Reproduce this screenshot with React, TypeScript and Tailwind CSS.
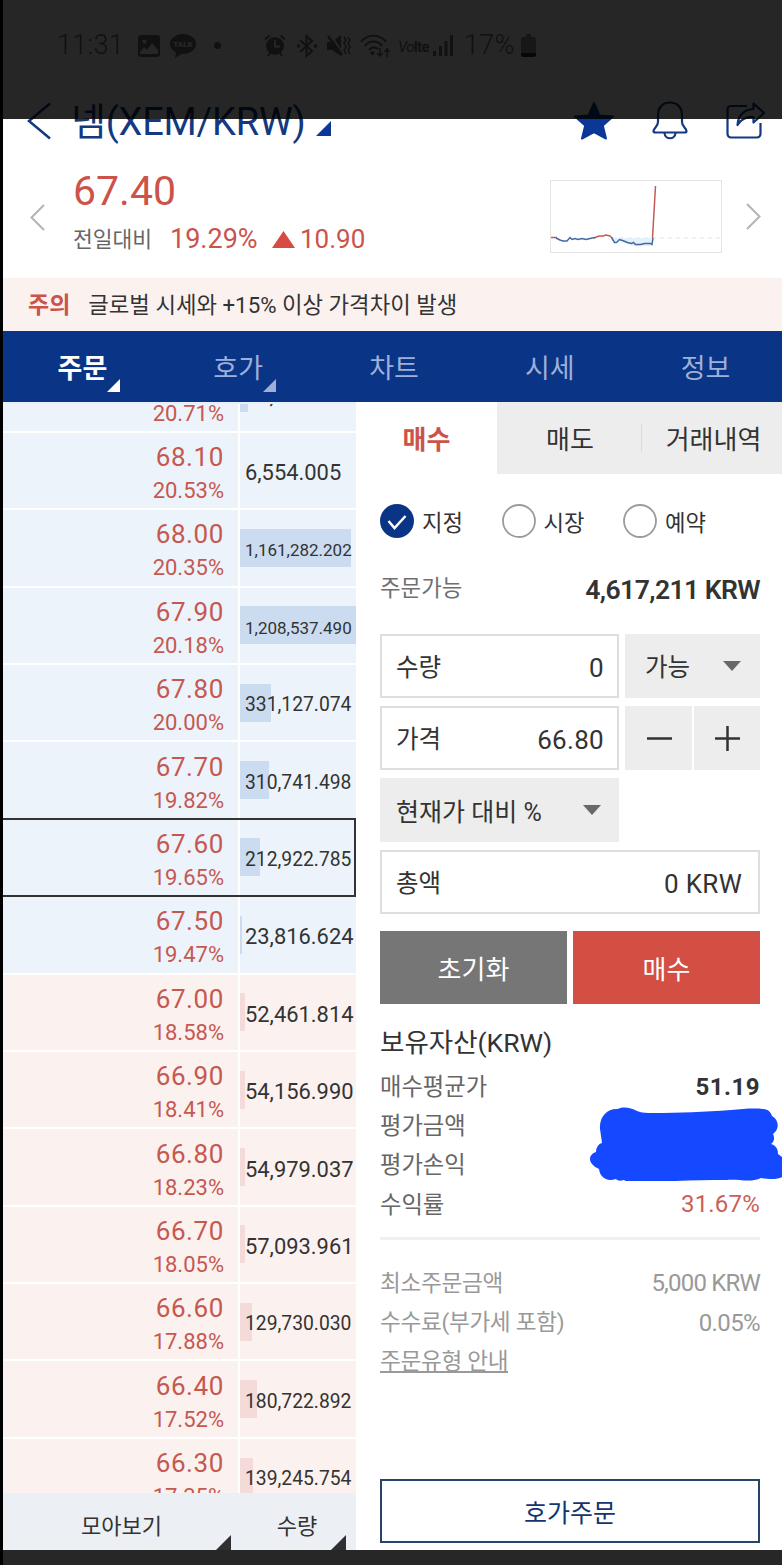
import {clsx} from 'clsx'
import type {ReactNode} from 'react'

type Order = {
  price: string
  rate: string
  amount: string
  fill: number
  side: 'ask' | 'bid'
  current?: boolean
}

const orders: Order[] = [
  {price: '', rate: '20.71%', amount: '82,301.117', fill: 6.5, side: 'ask'},
  {price: '68.10', rate: '20.53%', amount: '6,554.005', fill: 0, side: 'ask'},
  {price: '68.00', rate: '20.35%', amount: '1,161,282.202', fill: 95.5, side: 'ask'},
  {price: '67.90', rate: '20.18%', amount: '1,208,537.490', fill: 100, side: 'ask'},
  {price: '67.80', rate: '20.00%', amount: '331,127.074', fill: 27, side: 'ask'},
  {price: '67.70', rate: '19.82%', amount: '310,741.498', fill: 25, side: 'ask'},
  {price: '67.60', rate: '19.65%', amount: '212,922.785', fill: 17, side: 'ask', current: true},
  {price: '67.50', rate: '19.47%', amount: '23,816.624', fill: 1.7, side: 'ask'},
  {price: '67.00', rate: '18.58%', amount: '52,461.814', fill: 4, side: 'bid'},
  {price: '66.90', rate: '18.41%', amount: '54,156.990', fill: 4, side: 'bid'},
  {price: '66.80', rate: '18.23%', amount: '54,979.037', fill: 4, side: 'bid'},
  {price: '66.70', rate: '18.05%', amount: '57,093.961', fill: 4.3, side: 'bid'},
  {price: '66.60', rate: '17.88%', amount: '129,730.030', fill: 10.5, side: 'bid'},
  {price: '66.40', rate: '17.52%', amount: '180,722.892', fill: 14.5, side: 'bid'},
  {price: '66.30', rate: '17.35%', amount: '139,245.754', fill: 11, side: 'bid'},
]

const StatusBar = () => (
  <div className="h-[91px] shrink-0 flex items-center pl-[54px] text-[#707070] text-[27px] font-light tracking-[0.3px]">
    <span className="w-[81px]">11:31</span>
    <svg width="22" height="22" viewBox="0 0 22 22" className="mr-[10px]">
      <path
        fill="currentColor"
        fillRule="evenodd"
        d="M3 0h16a3 3 0 0 1 3 3v16a3 3 0 0 1-3 3H3a3 3 0 0 1-3-3V3a3 3 0 0 1 3-3Zm-1 17v2h18v-4l-6-7-5 7-3-3-4 5ZM6.500 4.500a2 2 0 1 0 0 4 2 2 0 0 0 0-4Z"
      />
    </svg>
    <svg width="26" height="24" viewBox="0 0 26 24" className="mr-[18px]">
      <path fill="currentColor" d="M13 0C5.800 0 0 4.400 0 10c0 3.600 2.300 6.600 6 8.400L5 24l6.200-4.100c.6.100 1.200.1 1.800.1 7.200 0 13-4.400 13-10S20.200 0 13 0Z" />
      <text x="13" y="13" textAnchor="middle" fontSize="8" fontWeight="900" letterSpacing="0" fill="#ffffff">
        TALK
      </text>
    </svg>
    <span className="size-[7px] rounded-full bg-current mr-[43px]" />
    <svg width="22" height="23" viewBox="0 0 22 23" className="mr-[10px]" fill="none" stroke="currentColor" strokeWidth="2">
      <circle cx="11" cy="12" r="9" fill="currentColor" stroke="none" />
      <path d="M1 5.500 5.500 1.500M21 5.500l-4.500-4M4 22l2-3M18 22l-2-3" />
      <path stroke="#ffffff" strokeWidth="1.800" d="M11 6v6.500h5" />
    </svg>
    <svg width="22" height="24" viewBox="0 0 22 24" className="mr-[9px]" fill="none" stroke="currentColor" strokeWidth="2">
      <path d="m4 6 12 11-5.500 5V2L16 7 4 18" />
      <path strokeWidth="3" d="M1 12h3M18 12h3" />
    </svg>
    <svg width="24" height="22" viewBox="0 0 24 22" className="mr-[9px]" fill="none" stroke="currentColor" strokeWidth="2">
      <path fill="currentColor" stroke="none" d="M0 7h5l9-7v21l-9-6H0Z" />
      <path stroke="#ffffff" d="M4 0 16 19" />
      <path strokeWidth="2.500" d="m1 1 14 19" />
      <path d="M17 2l2 3-2 3 2 4-2 3 2 4M21 2l2 3-2 3 2 4-2 3 2 4" strokeWidth="1.500" />
    </svg>
    <svg width="30" height="24" viewBox="0 0 30 24" className="mr-[8px]" fill="none" stroke="currentColor" strokeWidth="2">
      <path d="M1 8C7-.5 20-.5 26 8M5 12c4-6 13-6 17 0M9 16c2-3 6-3.500 9-1" />
      <circle cx="12.500" cy="19" r="2" fill="currentColor" stroke="none" />
      <path d="M20 14v8m-3-3 3 3 3-3M27 23v-8m-2.500 3 2.500-3 2.500 3" strokeWidth="1.500" />
    </svg>
    <span className="w-[35px] text-[15px] font-bold tracking-[-0.7px] whitespace-nowrap pt-1">
      <i className="font-normal">Vo</i>lte
    </span>
    <svg width="20" height="21" viewBox="0 0 20 21" className="mr-[11px]" fill="currentColor">
      <path d="M0 16h3v5H0ZM6 11h3v10H6ZM11.500 6h3v15h-3ZM17 0h3v21h-3Z" />
    </svg>
    <span className="w-[57px]">17%</span>
    <svg width="15" height="23" viewBox="0 0 15 23">
      <path fill="#9a9a9a" d="M5 0h5v3h3a2 2 0 0 1 2 2v14H0V5a2 2 0 0 1 2-2h3Z" />
      <path fill="#333333" d="M0 19h15v2a2 2 0 0 1-2 2H2a2 2 0 0 1-2-2Z" />
    </svg>
  </div>
)

const TitleBar = () => (
  <div className="h-[59px] shrink-0 flex items-center pl-[24px] pr-[17px] text-[#123981]">
    <svg width="26" height="38" viewBox="0 0 26 38" fill="none" stroke="currentColor" strokeWidth="2.500">
      <path d="M23 1.500 2 19l21 17.500" />
    </svg>
    <h1 className="ml-[18px] pt-[3px] text-[38px] leading-none tracking-[-0.2px] whitespace-nowrap">넴(XEM/KRW)</h1>
    <svg width="15" height="15" viewBox="0 0 15 15" className="ml-[11px] mt-[16px]">
      <path fill="#0b3796" d="M15 0v15H0Z" />
    </svg>
    <div className="ml-auto flex items-center gap-[38px]">
      <svg width="40" height="39" viewBox="0 0 40 39">
        <path
          fill="#0b3796"
          stroke="#0b3796"
          strokeWidth="2"
          strokeLinejoin="round"
          d="m20 2 5.300 12.500L39 15.500 28.800 24.500 32 37.500 20 31 8 37.500l3.200-13L1 15.500l13.700-1Z"
        />
      </svg>
      <svg width="36" height="39" viewBox="0 0 36 39" fill="none" stroke="currentColor" strokeWidth="2.200" strokeLinejoin="round">
        <path d="M18 1.500C10 1.500 6 7.500 6 14v7c0 5-4.500 6-4.500 9 0 1 .8 1.500 2 1.500h29c1.200 0 2-.5 2-1.500 0-3-4.500-4-4.500-9v-7c0-6.500-4-12.500-12-12.500Z" />
        <path d="M12.500 32c.5 7 10.500 7 11 0" />
      </svg>
      <svg width="39" height="37" viewBox="0 0 39 37" fill="none" stroke="currentColor" strokeWidth="2.200" strokeLinejoin="round">
        <path d="M21 4H5a3.500 3.500 0 0 0-3.500 3.500v24.500A3.500 3.500 0 0 0 5 35.500h26a3.500 3.500 0 0 0 3.500-3.500V21" />
        <path d="M27.500 1.500 38 11 27.500 20.500v-5.500c-7-.5-12 1.500-16 8 .5-9 6-15.500 16-16Z" />
      </svg>
    </div>
  </div>
)

const MiniChart = () => (
  <svg width="172" height="73" viewBox="0 0 172 73" fill="none">
    <rect x=".5" y=".5" width="171" height="72" stroke="#e4e4e4" />
    <path d="M62 58H171" stroke="#e2e2e2" strokeDasharray="4 4" />
    <path fill="#e4f0fb" d="M62 58h41l-2 8H82l-10-4-5-2-3 3Z" />
    <path stroke="#c65a55" strokeWidth="1.500" d="M1 57.500h6M44 58l5-2 4 0 3-1 4 1 2 2M102.500 58l3-52" />
    <path
      stroke="#44699f"
      strokeWidth="1.500"
      d="m6 58 4 2 3 1 4 0 3-3.500 2 2 3-1 3 1 4-1 4 1 4-1 5-1M61.500 57.500l3 5 2 0 3-3 3 1 5 2 4 1 2-1 2 2 5 0 4-1 6 0 1.500 1 1-6.500"
    />
  </svg>
)

const Arrow = ({flip = false}: {flip?: boolean}) => (
  <svg width="15" height="27" viewBox="0 0 15 27" fill="none" stroke="#b4b4b4" strokeWidth="2" className={clsx(flip && 'rotate-180')}>
    <path d="M14 1 1.500 13.500 14 26" />
  </svg>
)

const Quote = () => (
  <div className="h-[128px] shrink-0 flex items-start pl-[27px] pr-[21px] text-[#cb5349]">
    <div className="mt-[54px]">
      <Arrow />
    </div>
    <div className="ml-[28px]">
      <p className="mt-[20px] text-[41px] leading-[43px]">67.40</p>
      <div className="mt-[10px] flex items-center h-[32px] text-[26px] leading-none">
        <span className="w-[97px] pt-[2px] text-[21.500px] text-[#666] whitespace-nowrap">전일대비</span>
        <span className="w-[102px] text-[27px]">19.29%</span>
        <svg width="23" height="17" viewBox="0 0 23 17" className="mr-[5px]">
          <path fill="#d64c42" d="M11.500 0 23 17H0Z" />
        </svg>
        <span>10.90</span>
      </div>
    </div>
    <div className="ml-auto flex items-center gap-[24px]">
      <div className="mt-[30px]">
        <MiniChart />
      </div>
      <div className="mt-[30px]">
        <Arrow flip />
      </div>
    </div>
  </div>
)

const Notice = () => (
  <div className="h-[53px] shrink-0 flex items-center gap-[18px] pt-[2px] pl-[25px] bg-[#fbf1ef] leading-none whitespace-nowrap">
    <b className="text-[23px] text-[#cb5349]">주의</b>
    <span className="text-[22.300px] text-[#333]">글로벌 시세와 +15% 이상 가격차이 발생</span>
  </div>
)

const navItems = ['주문', '호가', '차트', '시세', '정보']

const Nav = () => (
  <nav className="h-[71px] shrink-0 grid grid-cols-5 bg-[#0a3485] text-[27px] text-[#9db0da]">
    {navItems.map((item, i) => (
      <div
        key={item}
        className={clsx('relative flex items-center justify-center pt-[5px] pl-[3px] leading-none', i === 0 && 'font-bold text-white')}
      >
        {item}
        {i < 2 && (
          <svg width="13" height="13" viewBox="0 0 13 13" fill="currentColor" className="absolute right-[39px] bottom-[10px]">
            <path d="M13 0v13H0Z" />
          </svg>
        )}
      </div>
    ))}
  </nav>
)

const amountSize = (amount: string) => {
  if (amount.length > 11) return 'text-[17px]'
  if (amount.length > 10) return 'text-[19.3px]'
  return 'text-[21.9px]'
}

const OrderRow = ({price, rate, amount, fill, side, current}: Order) => (
  <div className="relative h-[77.400px] shrink-0 flex gap-[2px] border-b-2 border-white">
    <div
      className={clsx(
        'w-[235px] pt-[7px] pr-[14px] flex flex-col justify-center items-end text-[#c55850]',
        side === 'ask' ? 'bg-[#edf3fa]' : 'bg-[#fbf1ef]'
      )}
    >
      <span className="h-[34px] text-[26px] leading-[34px] tracking-[0.6px]">{price}</span>
      <span className="text-[22px] leading-[34px]">{rate}</span>
    </div>
    <div className={clsx('relative flex-1 flex items-center', side === 'ask' ? 'bg-[#edf3fa]' : 'bg-[#fbf1ef]')}>
      <div
        className={clsx('absolute left-0 h-[38px]', side === 'ask' ? 'bg-[#cbdcf0]' : 'bg-[#f4dad8]')}
        style={{width: `${fill}%`}}
      />
      <span className={clsx('relative pt-[6px] pl-[5px] text-[#333] whitespace-nowrap', amountSize(amount))}>{amount}</span>
    </div>
    {current && <div className="absolute -top-[2px] -bottom-[2px] inset-x-0 border-2 border-l-0 border-[#333]" />}
  </div>
)

const Corner = ({className}: {className: string}) => (
  <svg width="15" height="15" viewBox="0 0 15 15" className={clsx('absolute bottom-0', className)}>
    <path fill="#303033" d="M15 0v15H0Z" />
  </svg>
)

const OrderBook = () => (
  <div className="w-[353px] shrink-0 flex flex-col">
    <div className="h-[1091px] overflow-hidden border-t-2 border-[#e6effb]">
      <div className="-mt-[48.600px] flex flex-col">
        {orders.map((order) => (
          <OrderRow key={order.rate} {...order} />
        ))}
      </div>
    </div>
    <div className="flex-1 flex bg-[#eceff4] text-[22px] leading-none text-[#333]">
      <div className="relative w-[237px] pt-[10px] flex items-center justify-center">
        모아보기
        <Corner className="right-[9px]" />
      </div>
      <div className="relative flex-1 pt-[10px] pr-[2px] flex items-center justify-center">
        수량
        <Corner className="right-[10px]" />
      </div>
    </div>
  </div>
)

const Radio = ({label, checked = false}: {label: string; checked?: boolean}) => (
  <div className="w-[121.500px] flex items-center gap-[8px] text-[22.300px] leading-none text-[#333]">
    <svg width="34" height="34" viewBox="0 0 34 34" fill="none">
      {checked ? (
        <>
          <circle cx="17" cy="17" r="17" fill="#0a3485" />
          <path d="m8.500 17 6 7 11-12" stroke="#ffffff" strokeWidth="2.500" />
        </>
      ) : (
        <circle cx="17" cy="17" r="16" stroke="#9b9b9b" strokeWidth="1.800" />
      )}
    </svg>
    <span className="pt-[4px]">{label}</span>
  </div>
)

const Caret = () => (
  <svg width="18" height="10" viewBox="0 0 18 10">
    <path fill="#686868" d="M0 0h18L9 10Z" />
  </svg>
)

const Field = ({label, value, className}: {label: string; value: string; className: string}) => (
  <div className={clsx('h-[64px] flex items-center justify-between border-2 border-[#dedede] pt-[3px] pl-[14px] text-[26px] leading-none', className)}>
    <span className="pt-[2px] text-[24.500px]">{label}</span>
    <span className="tracking-[0.3px]">{value}</span>
  </div>
)

const Step = ({children}: {children: ReactNode}) => (
  <div className="flex-1 flex items-center justify-center bg-[#ededed] pl-[2px]">
    <svg width="25" height="25" viewBox="0 0 25 25" stroke="#333333" strokeWidth="2.500">
      {children}
    </svg>
  </div>
)

const Row = ({label, children}: {label: string; children?: ReactNode}) => (
  <div className="h-[39.200px] flex items-center justify-between leading-none">
    <span className="pt-[2px]">{label}</span>
    {children}
  </div>
)

const OrderForm = () => (
  <div className="flex-1 flex flex-col">
    <div className="h-[72px] shrink-0 flex text-[26px] leading-none text-[#333]">
      <div className="w-[141px] pt-[4px] flex items-center justify-center font-bold text-[#cb5349]">매수</div>
      <div className="flex-1 flex items-center bg-[#ededed]">
        <div className="w-[144px] pt-[4px] pl-[2px] flex justify-center">매도</div>
        <div className="w-px h-[28px] bg-[#dadada]" />
        <div className="flex-1 pt-[4px] pl-[3px] flex justify-center whitespace-nowrap">거래내역</div>
      </div>
    </div>
    <div className="flex-1 flex flex-col pl-[24px] pr-[22px] text-[#333]">
      <div className="h-[94px] flex items-center">
        <Radio label="지정" checked />
        <Radio label="시장" />
        <Radio label="예약" />
      </div>
      <div className="h-[41px] flex items-center justify-between leading-none">
        <span className="text-[22.400px] text-[#707070]">주문가능</span>
        <b className="text-[26.600px] font-semibold tracking-[-0.6px] pt-[3px]">4,617,211 KRW</b>
      </div>
      <div className="mt-[25px] flex gap-[6px]">
        <Field label="수량" value="0" className="w-[239px] pr-[13px]" />
        <div className="flex-1 flex items-center justify-between bg-[#ededed] pl-[20px] pr-[19px] text-[24.500px] leading-none">
          <span className="pt-[4px]">가능</span>
          <Caret />
        </div>
      </div>
      <div className="mt-[8px] flex gap-[6px]">
        <Field label="가격" value="66.80" className="w-[239px] pr-[13px]" />
        <div className="flex-1 flex gap-[2px]">
          <Step>
            <path d="M0 12.500h25" />
          </Step>
          <Step>
            <path d="M0 12.500h25M12.500 0v25" />
          </Step>
        </div>
      </div>
      <div className="mt-[8px] w-[239px] h-[64px] flex items-center justify-between bg-[#ededed] pl-[16px] pr-[18px] text-[25px] leading-none whitespace-nowrap">
        <span className="pt-[4px]">현재가 대비 %</span>
        <Caret />
      </div>
      <Field label="총액" value="0 KRW" className="mt-[8px] pr-[16px]" />
      <div className="mt-[17px] h-[73px] flex gap-[6px] text-[26px] leading-none text-white">
        <div className="flex-1 pt-[4px] flex items-center justify-center bg-[#767676]">초기화</div>
        <div className="flex-1 pt-[4px] flex items-center justify-center bg-[#d34e43]">매수</div>
      </div>
      <h2 className="mt-[19px] h-[39px] pt-[2px] flex items-center text-[26.500px] leading-none">보유자산(KRW)</h2>
      <div className="mt-[5px] text-[23.300px] text-[#666]">
        <Row label="매수평균가">
          <b className="text-[24px] text-[#333] tracking-[0.5px]">51.19</b>
        </Row>
        <Row label="평가금액" />
        <div className="relative">
          <Row label="평가손익" />
          {/* marker scribble hiding the two amounts */}
          <svg width="192" height="74" viewBox="0 0 192 74" className="absolute right-[-22px] top-[-38px]">
            <path
              fill="#1549ff"
              d="M10 22C9 9 18 1 28 2c6-3 13-1 19 2 5 2 10 2 16 2 27 0 51-1 78-3 12-1 22-2 32-1 6 0 8 4 9 7 7 4 8 13 1 18 2 4 1 8-2 10 6 2 7 6 7 10l4 3v20c-5 3-15 2-21 1-10 5-22 1-34 2-28 0-54 0-82 4-4 0-6-1-9-2-5 1-9 0-12-2-4 1-6 1-8-1-10 3-16-2-17-10C-4 56-1 47 6 45c0-4 2-8 6-9Z"
            />
          </svg>
        </div>
        <Row label="수익률">
          <span className="text-[24px] tracking-[0.200px] text-[#cb5f57]">31.67%</span>
        </Row>
      </div>
      <div className="mt-[13px] h-[3px] bg-[#f0f0f0]" />
      <div className="mt-[24px] text-[22.600px] tracking-[-0.3px] text-[#999]">
        <Row label="최소주문금액">
          <span className="text-[24px] tracking-[-0.8px]">5,000 KRW</span>
        </Row>
        <Row label="수수료(부가세 포함)">
          <span className="text-[24px] tracking-[-0.6px]">0.05%</span>
        </Row>
        <div className="h-[39px] pt-[1px] flex items-center">
          <span className="leading-[19px] border-b-2 border-[#999]">주문유형 안내</span>
        </div>
      </div>
      <div className="mt-auto mb-[7px] h-[64px] pt-[4px] shrink-0 flex items-center justify-center border-2 border-[#284468] text-[25px] leading-none text-[#14356f]">
        호가주문
      </div>
    </div>
  </div>
)

export default function App() {
  return (
    <div className="relative w-[782px] h-[1565px] overflow-hidden bg-black pl-[3px] font-['Roboto','Noto_Sans_CJK_KR',sans-serif]">
      <main className="h-full flex flex-col bg-white">
        <StatusBar />
        <TitleBar />
        <Quote />
        <Notice />
        <Nav />
        <div className="h-[1148px] shrink-0 flex">
          <OrderBook />
          <OrderForm />
        </div>
        <div className="flex-1 bg-[#272727]" />
      </main>
      <div className="absolute left-[3px] right-0 top-0 h-[119px] bg-black/85" />
    </div>
  )
}
